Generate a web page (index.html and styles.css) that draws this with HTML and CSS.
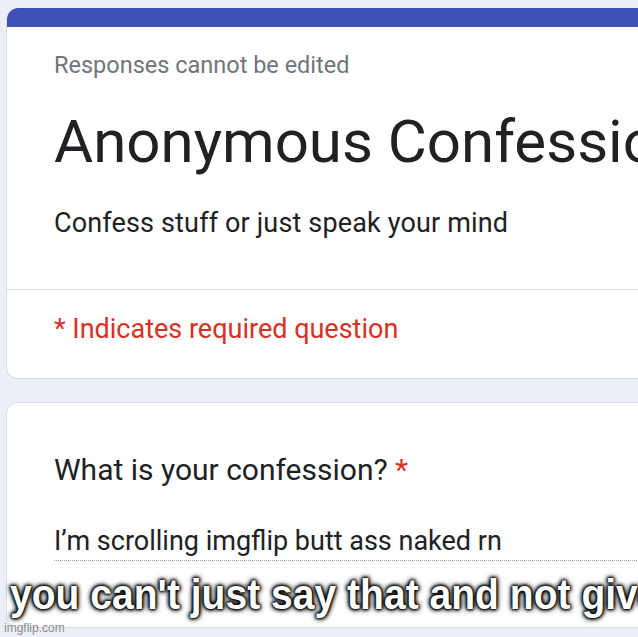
FILE: index.html
```html
<!DOCTYPE html>
<html lang="en">
<head>
  <meta charset="UTF-8">
  <title>Anonymous Confessions</title>
  <link rel="stylesheet" href="styles.css">
</head>
<body>

  <div class="page">
    <div class="card header-card">
      <div class="theme-bar"></div>
      <div class="header-top">
        <p class="edit-note">Responses cannot be edited</p>
        <h1 class="form-title">Anonymous Confessions</h1>
        <p class="form-desc">Confess stuff or just speak your mind</p>
      </div>
      <div class="header-bottom">
        <p class="required-note">* Indicates required question</p>
      </div>
    </div>

    <div class="card question-card">
      <p class="question">What is your confession? <span class="star">*</span></p>
      <p class="answer">I’m scrolling imgflip butt ass naked rn</p>
    </div>
  </div>

  <div class="caption">you can't just say that and not give us a pic</div>
  <div class="watermark">imgflip.com</div>

</body>
</html>
```

FILE: styles.css
```css
/* Global reset */
* {
  margin: 0;
  padding: 0;
  box-sizing: border-box;
}

body {
  background-color: #eceef8;
  font-family: 'Roboto', 'Liberation Sans', sans-serif;
  color: #202124;
  width: 638px;
  height: 637px;
  overflow: hidden;
  position: relative;
}

.page {
  padding: 8px 0 0 6px;
  width: 900px;
  display: flex;
  flex-direction: column;
  gap: 23px;
}

.card {
  background-color: #fff;
  border: 1px solid #dadce0;
  border-radius: 12px;
  overflow: hidden;
}

.header-card {
  border-top: none;
}

.theme-bar {
  height: 19px;
  background-color: #3f51b5;
}

.header-top {
  padding: 23px 47px 49px;
  border-bottom: 1px solid #dadce0;
}

.edit-note {
  font-size: 23.5px;
  line-height: 30px;
  color: #70757a;
}

.form-title {
  font-size: 60px;
  line-height: 70px;
  font-weight: 400;
  margin-top: 27px;
  white-space: nowrap;
}

.form-desc {
  font-size: 27px;
  line-height: 34px;
  letter-spacing: 0.15px;
  margin-top: 29px;
}

.header-bottom {
  padding: 22px 47px 32px;
}

.required-note {
  font-size: 27px;
  line-height: 34px;
  color: #d93025;
}

.question-card {
  height: 226px;
  padding: 48px 0 0 47px;
}

.question {
  font-size: 30px;
  line-height: 38px;
}

.star {
  color: #d93025;
}

.answer {
  font-size: 27px;
  line-height: 34px;
  margin-top: 35px;
  padding-bottom: 2px;
  border-bottom: 1px dotted #9aa0a6;
}

/* Meme overlay */
.caption {
  position: absolute;
  left: 10px;
  top: 572px;
  font-family: 'Liberation Sans', Arial, sans-serif;
  font-weight: 700;
  font-size: 42px;
  line-height: 46px;
  color: #fff;
  white-space: nowrap;
  transform: scaleX(0.93);
  transform-origin: left center;
  text-shadow: 0 0 2px #000, 0 0 3px #000, 0 0 4px #000, 0 0 5px #000, 0 0 7px #000;
}

.watermark {
  position: absolute;
  left: 4px;
  bottom: 2px;
  font-family: 'Liberation Sans', Arial, sans-serif;
  font-size: 12px;
  color: #8c8c8c;
}
```
